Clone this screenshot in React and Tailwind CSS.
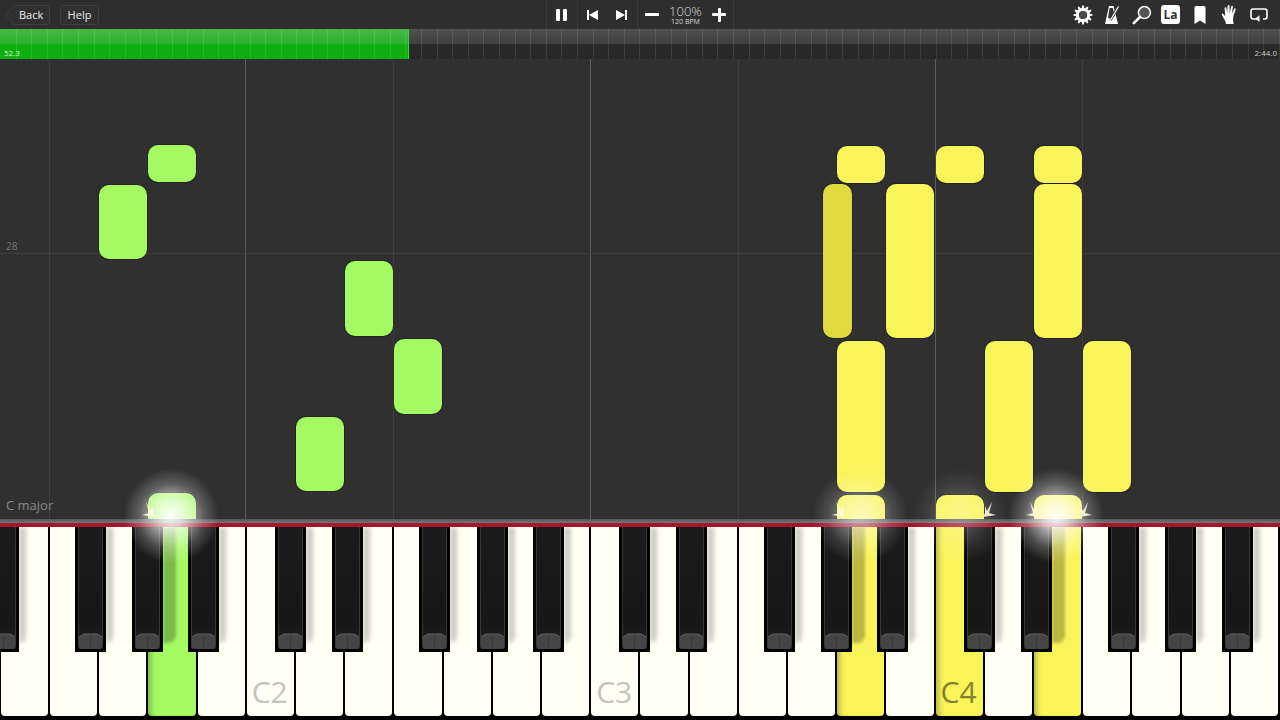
import React from 'react';

// white keys, index 0 is the E at the left edge
const WHITE_KEYS = Array.from({ length: 26 }, (_, i) => i);
const LIT = { 3: 'green', 17: 'yellow', 19: 'yellow', 21: 'yellow' };
const LABELS = { 5: 'C2', 12: 'C3', 19: 'C4' };

// where the black key sits on the white key it belongs to, by degree (0 = E)
const BLACK_OFFSET = {
  1: 'left-[25px]',
  2: 'left-[33px]',
  3: 'left-[40px]',
  5: 'left-[28px]',
  6: 'left-[36px]',
};

const GREEN_NOTES = [
  [148, 145, 48, 37],
  [99, 185, 48, 74],
  [345, 261, 48, 75],
  [394, 339, 48, 75],
  [296, 417, 48, 74],
];
const YELLOW_NOTES = [
  [837, 146, 48, 37],
  [936, 146, 48, 37],
  [1034, 146, 48, 37],
  [886, 184, 48, 154],
  [1034, 184, 48, 154],
  [837, 341, 48, 151],
  [985, 341, 48, 151],
  [1083, 341, 48, 151],
];

const GRID_DIM = [49, 393, 738, 1082];
const GRID_BRIGHT = [245, 590, 935];
const TICKS = Array.from({ length: 83 }, (_, i) => i);

const Note = ({ n, className }) => (
  <div
    className={`absolute rounded-[10px] ring-1 ring-black/25 ${className}`}
    style={{ left: n[0], top: n[1] - 59, width: n[2], height: n[3] }}
  />
);

const Glow = ({ x, className }) => (
  <div
    className={`absolute z-20 w-[96px] h-[96px] rounded-full pointer-events-none bg-[radial-gradient(circle,rgba(255,255,255,0.95)_0%,rgba(255,255,255,0.7)_20%,rgba(255,255,255,0.22)_48%,rgba(255,255,255,0)_70%)] ${className}`}
    style={{ left: x - 48, top: 516 - 48 }}
  />
);

const Spark = ({ x, flip }) => (
  <svg
    className="absolute z-20 pointer-events-none"
    style={{ left: x, top: 502, transform: flip ? 'scaleX(-1)' : undefined }}
    width="14"
    height="16"
    viewBox="0 0 14 16"
  >
    <path d="M13 15 L0 13 L7 11 L4 0 L9 9 L11 4 L11 11 Z" fill="#fffde0" opacity="0.9" />
  </svg>
);

const Sep = () => <div className="w-px h-[29px] bg-white/5" />;

const Gear = () => (
  <svg width="20" height="20" viewBox="0 0 20 20">
    <g fill="#fff">
      {[0, 30, 60, 90, 120, 150, 180, 210, 240, 270, 300, 330].map((a) => (
        <path key={a} d="M8.4 5 L9.2 0.6 H10.8 L11.6 5 Z" transform={`rotate(${a} 10 10)`} />
      ))}
    </g>
    <circle cx="10" cy="10" r="5.6" fill="none" stroke="#fff" strokeWidth="3" />
    <circle cx="10" cy="10" r="3.6" fill="#4a4a4a" />
  </svg>
);

const Metronome = () => (
  <svg width="16" height="20" viewBox="0 0 16 20">
    <path d="M5 1 H9.5 L14 19 H1 Z" fill="#fff" />
    <path d="M5.6 3 H8.8 L10.8 11 L8 13 H4 Z" fill="#333" />
    <path d="M14.5 1.5 L6.5 15" stroke="#333" strokeWidth="2.6" />
    <path d="M14.5 1.5 L6.5 15" stroke="#fff" strokeWidth="1.2" />
  </svg>
);

const Magnifier = () => (
  <svg width="20" height="20" viewBox="0 0 20 20">
    <circle cx="12.4" cy="7.6" r="6" fill="#555" stroke="#fff" strokeWidth="1.5" />
    <path d="M8 12 L1.8 18.2" stroke="#fff" strokeWidth="2.6" strokeLinecap="round" />
  </svg>
);

const Bookmark = () => (
  <svg width="12" height="20" viewBox="0 0 12 20">
    <path d="M2 1 H10 Q11.5 1 11.5 2.5 V19 L6 15.5 L0.5 19 V2.5 Q0.5 1 2 1 Z" fill="#fff" />
  </svg>
);

const HandIcon = () => (
  <svg width="18" height="21" viewBox="0 0 18 21">
    <path
      d="M5 20 Q4.5 16.5 2.5 14 L0.8 10.6 Q0.6 9.4 1.8 9.6 L4.2 12.2 L3.6 4 Q3.8 3 4.6 3.2 Q5.3 3.4 5.4 4.2 L6.2 9.4 L6.6 1.8 Q6.8 0.8 7.7 0.9 Q8.5 1 8.5 2 L8.7 9.2 L10.2 2.4 Q10.5 1.5 11.3 1.8 Q12 2.1 11.9 3 L10.8 9.8 L13.2 4.8 Q13.7 4 14.4 4.4 Q15 4.8 14.6 5.7 L12.4 12 Q11.6 15.5 12.6 20 Z"
      fill="#fff"
    />
  </svg>
);

const LoopIcon = () => (
  <svg width="18" height="14" viewBox="0 0 18 14">
    <path d="M9 11 H3.2 Q1 11 1 8.8 V3.2 Q1 1 3.2 1 H14.8 Q17 1 17 3.2 V8.8 Q17 11 14.8 11 H13" fill="none" stroke="#fff" strokeWidth="1.6" />
    <path d="M9.5 7.2 V14 L5.2 10.6 Z" fill="#fff" />
  </svg>
);

const TopBar = () => (
  <div className="h-[29px] flex items-center bg-[#2e2e2e]">
    <div className="flex items-center pl-[5px] gap-[10px] w-[546px] shrink-0">
      <div className="relative w-[45px] h-[20px]">
        <svg className="absolute inset-0" width="45" height="20" viewBox="0 0 45 20">
          <path d="M0.5 10 L9.5 0.5 H42 Q44.5 0.5 44.5 3 V17 Q44.5 19.5 42 19.5 H9.5 Z" fill="#303030" stroke="#404040" />
        </svg>
        <span className="relative block pl-[14px] leading-[20px] text-[11px] text-[#eee]">Back</span>
      </div>
      <div className="w-[39px] h-[20px] rounded-[3px] border border-[#404040] bg-[#303030] text-center leading-[18px] text-[11px] text-[#eee]">Help</div>
    </div>
    <Sep />
    <div className="w-[30px] flex justify-center pr-[2px]">
      <div className="flex gap-[3px]">
        <div className="w-[4px] h-[12px] bg-white rounded-[1px]" />
        <div className="w-[4px] h-[12px] bg-white rounded-[1px]" />
      </div>
    </div>
    <Sep />
    <div className="w-[59px] flex items-center pl-[9px] gap-[18px]">
      <svg width="11" height="10" viewBox="0 0 11 10"><path d="M0 0 H2 V10 H0 Z M11 0 V10 L2 5 Z" fill="#fff" /></svg>
      <svg width="11" height="10" viewBox="0 0 11 10"><path d="M11 0 H9 V10 H11 Z M0 0 V10 L9 5 Z" fill="#fff" /></svg>
    </div>
    <Sep />
    <div className="w-[95px] flex items-center pl-[7px]">
      <div className="w-[14px] h-[3px] bg-white rounded-[1px]" />
      <div className="w-[53px] flex flex-col items-center text-[#ddd]">
        <span className="text-[13px] leading-[14px] font-light">100%</span>
        <span className="text-[7px] leading-[8px]">120 BPM</span>
      </div>
      <div className="relative w-[14px] h-[14px]">
        <div className="absolute left-0 top-[5.5px] w-[14px] h-[3px] bg-white rounded-[1px]" />
        <div className="absolute left-[5.5px] top-0 w-[3px] h-[14px] bg-white rounded-[1px]" />
      </div>
    </div>
    <Sep />
    <div className="flex-1 flex items-center justify-end pr-[12px]">
      <Gear />
      <div className="ml-[11px] flex"><Metronome /></div>
      <div className="ml-[12px] flex"><Magnifier /></div>
      <div className="ml-[9px] w-[19px] h-[19px] rounded-[3px] bg-white flex items-center justify-center text-[12px] font-bold text-[#333]">La</div>
      <div className="ml-[14px] flex"><Bookmark /></div>
      <div className="ml-[15px] flex"><HandIcon /></div>
      <div className="ml-[11px] flex"><LoopIcon /></div>
    </div>
  </div>
);

const ProgressBar = () => (
  <div className="relative h-[30px] flex bg-[#1f1f1f] overflow-hidden">
    <div className="w-[409px] shrink-0 bg-[linear-gradient(#45b845_0%,#2fb32f_45%,#0fae0f_55%,#0fae0f_100%)] border-r border-[#3fd23f]" />
    <div className="flex-1 bg-[linear-gradient(#505050_0%,#404040_48%,#2a2a2a_52%,#262626_100%)]" />
    <div className="absolute inset-0 flex pl-[15.6px]">
      {TICKS.map((i) => (
        <div key={i} className="w-[15.6px] h-full shrink-0 border-l border-white/10" />
      ))}
    </div>
    <span className="absolute left-[4px] bottom-[2px] text-[8px] leading-[8px] text-[#d8f0d8]">52.3</span>
    <span className="absolute right-[3px] bottom-[2px] text-[8px] leading-[8px] text-[#ccc]">2:44.0</span>
  </div>
);

const Roll = () => (
  <div className="relative h-[460px] bg-[#303030] overflow-hidden">
    {GRID_DIM.map((x) => (
      <div key={x} className="absolute top-0 bottom-0 w-px bg-[#3f3f3f]" style={{ left: x }} />
    ))}
    {GRID_BRIGHT.map((x) => (
      <div key={x} className="absolute top-0 bottom-0 w-px bg-[#5e5e5e]" style={{ left: x }} />
    ))}
    <div className="absolute left-0 right-0 top-[194px] h-px bg-[#3f3f3f]" />
    <span className="absolute left-[6px] top-[181px] text-[10px] leading-[12px] text-[#777]">28</span>
    <span className="absolute left-[6px] top-[438px] text-[13px] leading-[16px] text-[#8a8a8a]">C major</span>

    {GREEN_NOTES.map((n) => (
      <Note key={`${n[0]}-${n[1]}`} n={n} className="bg-[#a5f962]" />
    ))}
    {YELLOW_NOTES.map((n) => (
      <Note key={`${n[0]}-${n[1]}`} n={n} className="bg-[#f9f45a]" />
    ))}
    <Note n={[823, 184, 29, 154]} className="bg-[#e0da3e] rounded-[6px]" />

    {/* notes being played, cut off by the keyboard */}
    <Note n={[148, 493, 48, 40]} className="bg-[#a5f962]" />
    <Note n={[837, 495, 48, 40]} className="bg-[#f9f45a]" />
    <Note n={[936, 495, 48, 40]} className="bg-[#f9f45a]" />
    <Note n={[1034, 495, 48, 40]} className="bg-[#f9f45a]" />
  </div>
);

const BlackKey = ({ className, onLit }) => (
  <div className={`absolute top-0 w-[31px] h-[125px] z-10 bg-black ${className}`}>
    <div className={`absolute top-0 left-[31px] h-[116px] rounded-br-[8px] ${onLit ? 'w-[13px] bg-black/25 blur-[1.5px]' : 'w-[7px] bg-black/20 blur-[2px]'}`} />
    <div className="relative ml-[3px] w-[25px] h-[122px] flex flex-col rounded-b-[3px] overflow-hidden border-x border-[#383838] bg-[linear-gradient(#1c1c1c_0%,#161616_80%,#262626_100%)]">
      <div className="flex-1" />
      <svg width="23" height="16" viewBox="0 0 23 16">
        <path d="M0 4 L5 1 H18 L23 4 V16 H0 Z" fill="#454545" />
        <path d="M0 4 L5 1 H18 L23 4" fill="none" stroke="#707070" strokeWidth="0.8" />
        <path d="M11.5 2 V16" stroke="#383838" strokeWidth="1" />
      </svg>
    </div>
  </div>
);

const WhiteKey = ({ i }) => {
  const lit = LIT[i];
  const bg = lit === 'green' ? 'bg-[#a5f962]' : lit === 'yellow' ? 'bg-[#f9f45a]' : 'bg-[#fffff4]';
  const shade = lit ? 'shadow-[inset_6px_0_5px_-3px_rgba(0,0,0,0.25)]' : '';
  const label = LABELS[i];
  const degree = i % 7;
  return (
    <div className={`relative h-full flex-1 rounded-b-[4px] ${bg} ${shade}`}>
      {label && (
        <span className={`absolute left-[5px] bottom-[9px] text-[30px] leading-[30px] ${lit ? 'text-[#85822e]' : 'text-[#c4c4ba]'}`}>
          {label}
        </span>
      )}
      {i === 0 && <BlackKey className="left-[-13px]" />}
      {BLACK_OFFSET[degree] && <BlackKey className={BLACK_OFFSET[degree]} onLit={!!LIT[i + 1]} />}
    </div>
  );
};

const Keyboard = () => (
  <div className="h-[201px] flex flex-col bg-black">
    <div className="h-[4px] bg-[linear-gradient(#555,#777)]" />
    <div className="h-[4px] bg-[#a8162e]" />
    <div className="h-[189px] w-[1277.2px] ml-[0.7px] flex gap-[2px]">
      {WHITE_KEYS.map((i) => (
        <WhiteKey key={i} i={i} />
      ))}
    </div>
  </div>
);

export default function App() {
  return (
    <div className="relative w-[1280px] h-[720px] overflow-hidden bg-black font-['Open_Sans','Noto_Sans',sans-serif]">
      <TopBar />
      <ProgressBar />
      <Roll />
      <Keyboard />
      <Glow x={171} />
      <Glow x={860} className="opacity-60" />
      <Glow x={960} className="opacity-30" />
      <Glow x={1056} />
      <Spark x={142} />
      <Spark x={832} />
      <Spark x={982} flip />
      <Spark x={1026} />
      <Spark x={1078} flip />
    </div>
  );
}
